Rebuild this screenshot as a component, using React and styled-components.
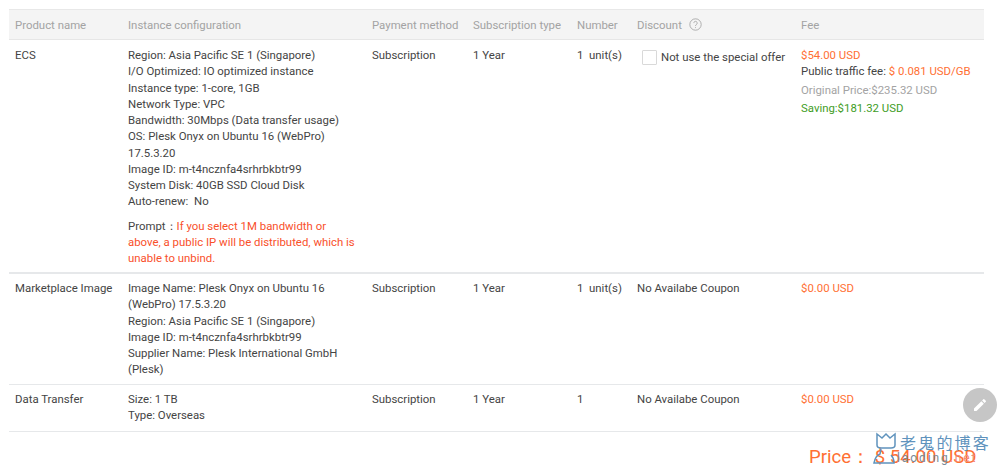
import React from 'react';
import styled, {createGlobalStyle} from 'styled-components';

const GlobalStyle = createGlobalStyle`
html, body {
    margin: 0;
    padding: 0;
    background: #fff;
}
body {
    font-family: Roboto, "Liberation Sans", sans-serif;
    font-size: 11.4px;
    color: #444;
}
`;
const COLUMNS = '113px 244px 101px 104px 60px 164px 189px';

const Page = styled.div`
position: relative;
width: 1000px;
height: 473px;
overflow: hidden;
padding: 9px 16px 0 9px;
box-sizing: border-box;
`;
const HeaderRow = styled.div`
display: grid;
grid-template-columns: ${COLUMNS};
height: 31px;
align-items: center;
background: #f4f4f4;
border-top: 1px solid #e8e8e8;
border-bottom: 1px solid #e6e6e6;
box-sizing: border-box;
color: #a3a3a3;
`;
const HeaderCell = styled.div`
padding-left: 6px;
display: flex;
align-items: center;
white-space: nowrap;
`;
const HelpIcon = styled.svg`
width: 13px;
height: 13px;
margin-left: 7px;
`;
const Row = styled.div`
display: grid;
grid-template-columns: ${COLUMNS};
height: ${(props) => props.height}px;
padding-top: ${(props) => props.top}px;
box-sizing: border-box;
border-bottom: ${(props) => props.line}px solid #e6e8ea;
line-height: 16.27px;
`;
const Cell = styled.div`
padding-left: 6px;
white-space: nowrap;
`;
const ConfigCell = styled(Cell)`
padding-right: 2px;
`;
const ConfigLine = styled.div`
`;
const Prompt = styled.div`
margin-top: 8px;
width: 232px;
white-space: normal;
`;
const PromptText = styled.span`
color: #f9502b;
`;
const DiscountOption = styled.label`
display: flex;
align-items: center;
margin-top: 2px;
margin-left: 5px;
`;
const Checkbox = styled.span`
width: 13px;
height: 13px;
border: 1px solid #d9d9d9;
border-radius: 1px;
margin-right: 4px;
background: #fff;
`;
const FeeLine = styled.div`
color: ${(props) => props.color || '#444'};
margin-top: ${(props) => props.gap || 0}px;
`;
const Orange = styled.span`
color: #ff7033;
`;
const EditButton = styled.div`
position: absolute;
left: 963px;
top: 388px;
width: 34px;
height: 34px;
border-radius: 50%;
background: #c6c6c6;
display: flex;
align-items: center;
justify-content: center;
`;
const Total = styled.div`
position: absolute;
left: 809px;
top: 444px;
font-size: 18.6px;
line-height: 26px;
color: #ff7033;
white-space: nowrap;
`;
const Watermark = styled.div`
position: absolute;
left: 873px;
top: 432px;
width: 127px;
height: 41px;
color: #5f93bd;
`;
const WatermarkTitle = styled.div`
position: absolute;
left: 27px;
top: 0;
font-family: "Noto Sans CJK SC", sans-serif;
font-size: 16px;
line-height: 20px;
letter-spacing: 2.2px;
white-space: nowrap;
`;
const WatermarkSite = styled.div`
position: absolute;
left: 24px;
top: 18px;
font-size: 12px;
line-height: 16px;
letter-spacing: 1.9px;
color: #7a8b97;
white-space: nowrap;
`;
const WatermarkDomain = styled.span`
color: #f08a78;
`;

const ecsLines = [
    'Region: Asia Pacific SE 1 (Singapore)',
    'I/O Optimized: IO optimized instance',
    'Instance type: 1-core, 1GB',
    'Network Type: VPC',
    'Bandwidth: 30Mbps (Data transfer usage)',
    'OS: Plesk Onyx on Ubuntu 16 (WebPro)',
    '17.5.3.20',
    'Image ID: m-t4ncznfa4srhrbkbtr99',
    'System Disk: 40GB SSD Cloud Disk',
    'Auto-renew:\u00a0 No',
];
const imageLines = [
    'Image Name: Plesk Onyx on Ubuntu 16',
    '(WebPro) 17.5.3.20',
    'Region: Asia Pacific SE 1 (Singapore)',
    'Image ID: m-t4ncznfa4srhrbkbtr99',
    'Supplier Name: Plesk International GmbH',
    '(Plesk)',
];
const headers = ['Product name', 'Instance configuration', 'Payment method', 'Subscription type', 'Number'];

const App = () => {
    const lines = (arr) => arr.map((e, idx) => <ConfigLine key={idx}>{e}</ConfigLine>);
    return (
        <Page>
            <GlobalStyle />
            <HeaderRow>
                {headers.map((e) => <HeaderCell key={e}>{e}</HeaderCell>)}
                <HeaderCell>
                    Discount
                    <HelpIcon viewBox="0 0 24 24" fill="none" stroke="#a3a3a3" strokeWidth="1.6">
                        <circle cx="12" cy="12" r="10.5" />
                        <path d="M8.8 9.4a3.2 3.2 0 1 1 4.8 2.8c-1 .6-1.6 1.2-1.6 2.6" />
                        <path d="M12 17v1.6" />
                    </HelpIcon>
                </HeaderCell>
                <HeaderCell>Fee</HeaderCell>
            </HeaderRow>
            <Row height={234} top={7} line={2}>
                <Cell>ECS</Cell>
                <ConfigCell>
                    {lines(ecsLines)}
                    <Prompt>Prompt：<PromptText>If you select 1M bandwidth or above, a public IP will be distributed, which is unable to unbind.</PromptText></Prompt>
                </ConfigCell>
                <Cell>Subscription</Cell>
                <Cell>1 Year</Cell>
                <Cell>1&nbsp; unit(s)</Cell>
                <Cell>
                    <DiscountOption><Checkbox />Not use the special offer</DiscountOption>
                </Cell>
                <Cell>
                    <FeeLine color="#ff7033">$54.00 USD</FeeLine>
                    <FeeLine>Public traffic fee: <Orange>$ 0.081 USD/GB</Orange></FeeLine>
                    <FeeLine color="#a3a3a3" gap={2}>Original Price:$235.32 USD</FeeLine>
                    <FeeLine color="#3f9d1f" gap={2}>Saving:$181.32 USD</FeeLine>
                </Cell>
            </Row>
            <Row height={111} top={6} line={1}>
                <Cell>Marketplace Image</Cell>
                <ConfigCell>{lines(imageLines)}</ConfigCell>
                <Cell>Subscription</Cell>
                <Cell>1 Year</Cell>
                <Cell>1&nbsp; unit(s)</Cell>
                <Cell>No Availabe Coupon</Cell>
                <Cell><FeeLine color="#ff7033">$0.00 USD</FeeLine></Cell>
            </Row>
            <Row height={47} top={6} line={1}>
                <Cell>Data Transfer</Cell>
                <ConfigCell>
                    <ConfigLine>Size: 1 TB</ConfigLine>
                    <ConfigLine>Type: Overseas</ConfigLine>
                </ConfigCell>
                <Cell>Subscription</Cell>
                <Cell>1 Year</Cell>
                <Cell>1</Cell>
                <Cell>No Availabe Coupon</Cell>
                <Cell><FeeLine color="#ff7033">$0.00 USD</FeeLine></Cell>
            </Row>
            <EditButton>
                <svg width="16" height="16" viewBox="0 0 24 24" fill="#fff">
                    <path d="M3 17.25V21h3.75L17.81 9.94l-3.75-3.75L3 17.25zM20.71 7.04a1 1 0 0 0 0-1.41l-2.34-2.34a1 1 0 0 0-1.41 0l-1.83 1.83 3.75 3.75 1.83-1.83z" />
                </svg>
            </EditButton>
            <Total>Price： $ 54.00 USD</Total>
            <Watermark>
                <svg width="26" height="34" viewBox="0 0 26 34" fill="none" stroke="#5f93bd" strokeWidth="1.5">
                    <path d="M4 2l5 4 4-4 4 4 5-4v11c0 2-2 3-4 3H8c-2 0-4-1-4-3z" />
                    <path d="M8 17l-1 5c-3 1-5 4-6 9h20c0-3-1-6-3-8" />
                </svg>
                <WatermarkTitle>老鬼的博客</WatermarkTitle>
                <WatermarkSite>laoding<WatermarkDomain>.net</WatermarkDomain></WatermarkSite>
            </Watermark>
        </Page>
    );
}

export default App;
